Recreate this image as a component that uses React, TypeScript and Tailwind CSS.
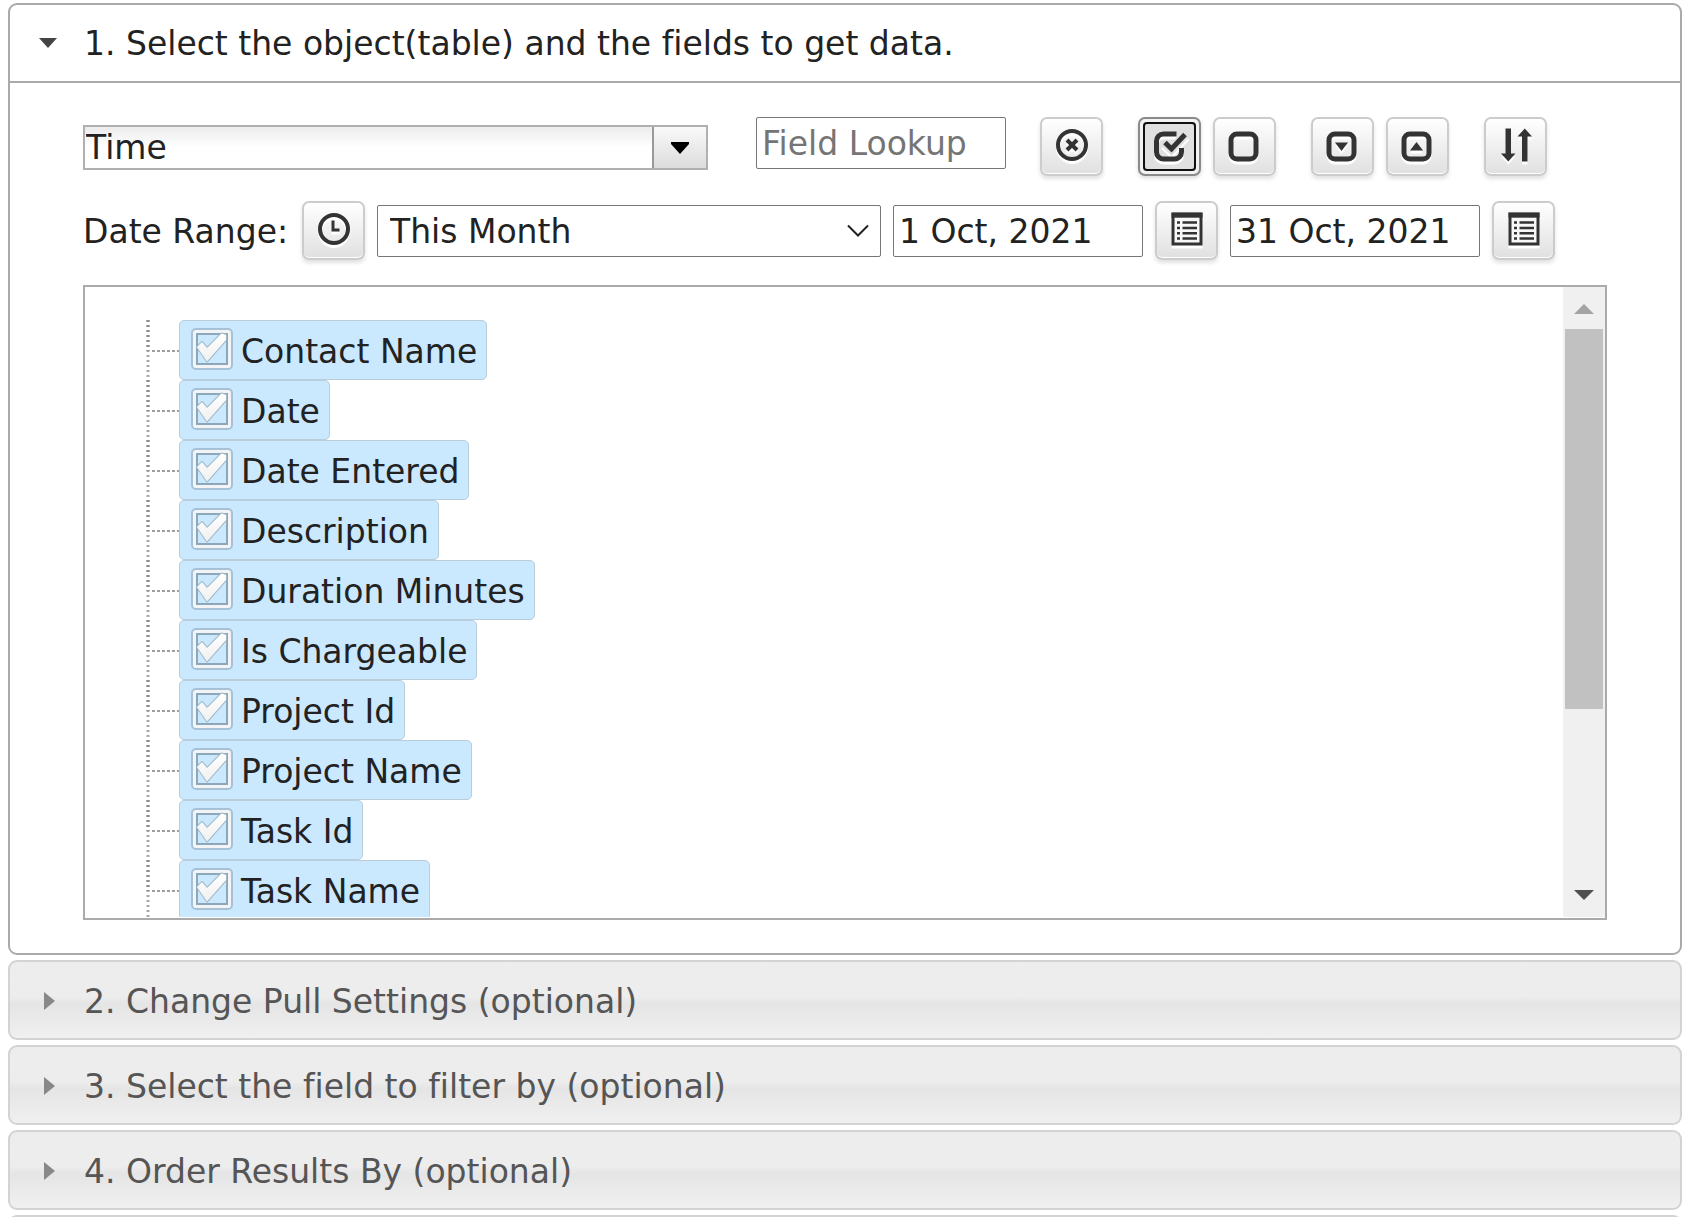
import React, { useState } from "react";

const FIELDS = [
  "Contact Name",
  "Date",
  "Date Entered",
  "Description",
  "Duration Minutes",
  "Is Chargeable",
  "Project Id",
  "Project Name",
  "Task Id",
  "Task Name",
];

const STEPS = [
  "2. Change Pull Settings (optional)",
  "3. Select the field to filter by (optional)",
  "4. Order Results By (optional)",
  "",
];

const inputClass =
  "h-[52px] w-[250px] shrink-0 rounded-[2px] border border-[#767676] bg-white px-[5px] text-[33px] text-[#222] placeholder:text-[#757575] outline-none";

type IconButtonProps = {
  label: string;
  focused?: boolean;
  onClick?: () => void;
  children: React.ReactNode;
};

function IconButton({ label, focused, onClick, children }: IconButtonProps) {
  return (
    <button
      type="button"
      aria-label={label}
      onClick={onClick}
      className={
        focused
          ? "relative flex h-[59px] w-[63px] shrink-0 items-center justify-center rounded-[7px] border-2 border-[#8a8a8a] bg-[#e0e0e0] pb-1 shadow-[inset_0_0_0_3px_#f2f2f2,0_2px_4px_rgba(0,0,0,0.15)] before:absolute before:inset-[3px] before:rounded-[4px] before:border-2 before:border-[#101010]"
          : "flex h-[59px] w-[63px] shrink-0 items-center justify-center rounded-[7px] border-2 border-[#ccc] bg-linear-to-b from-white to-[#e0e0e0] pb-1 shadow-[inset_0_-1px_0_#fff,0_3px_4px_rgba(0,0,0,0.12)]"
      }
    >
      <svg
        viewBox="0 0 36 36"
        className="size-9 overflow-visible drop-shadow-[0_3px_0_#fff]"
        fill="none"
        stroke="#333"
      >
        {children}
      </svg>
    </button>
  );
}

function CalendarIcon() {
  return (
    <>
      <rect x="4" y="3" width="28" height="30" fill="#f7f7f7" strokeWidth="3" />
      <path d="M2.500 4.200h31" strokeWidth="5" />
      <path d="M8 11.500h3M8 17h3M8 22.200h3M8 27.500h3" strokeWidth="2.6" />
      <path d="M13.500 11.500H28M13.500 17H28M13.500 22.200H28M13.500 27.500H28" strokeWidth="2.6" />
    </>
  );
}

function TreeBranch() {
  return (
    <svg viewBox="0 0 33 60" className="h-[60px] w-[33px] shrink-0" stroke="#8c8c8c">
      <path d="M2 0v60" strokeWidth="3" strokeDasharray="2 3" opacity="0.75" />
      <path d="M2 0v31" strokeWidth="3" strokeDasharray="2 3" />
      <path d="M6 31h27" strokeWidth="2" strokeDasharray="3 2" opacity="0.85" />
    </svg>
  );
}

function FieldRow({ name, checked, onToggle }: { name: string; checked: boolean; onToggle: () => void }) {
  return (
    <li className="flex h-[60px]">
      <TreeBranch />
      <label className="flex h-[60px] items-center rounded-[5px] border border-[#b9cddb] bg-[#cae8fe] pt-1 pr-[9px] pl-[11px]">
        <span className="mr-2 mb-[7px] grid">
          <input
            type="checkbox"
            checked={checked}
            onChange={onToggle}
            className="col-start-1 row-start-1 size-[42px] appearance-none"
          />
          <svg viewBox="0 0 42 42" className="pointer-events-none col-start-1 row-start-1 size-[42px]" fill="none">
            <defs>
              <linearGradient id="tick" x1="0" y1="0" x2="0" y2="1">
                <stop offset="0" stopColor="#fff" />
                <stop offset="1" stopColor="#f0f0f0" />
              </linearGradient>
            </defs>
            <rect x="1" y="1" width="40" height="40" rx="4" stroke="#8fa9bb" strokeWidth="2" opacity="0.6" />
            <rect x="3.500" y="3.500" width="35" height="35" rx="2" stroke="#f2f4f6" strokeWidth="3" />
            <rect x="6" y="6" width="30" height="30" stroke="#8ba7b9" strokeWidth="2" />
            {checked && (
              <path
                d="M6 19l5-5 5 6L30.500 5.500l4.500 1.500v5L16 33.500z"
                fill="url(#tick)"
                stroke="#9fb8c8"
                strokeWidth="2"
                strokeLinejoin="round"
                paintOrder="stroke"
              />
            )}
          </svg>
        </span>
        {name}
      </label>
    </li>
  );
}

export default function App() {
  const [selected, setSelected] = useState<string[]>(FIELDS);
  const [lookup, setLookup] = useState("");

  const toggle = (name: string) => {
    setSelected((prev) => (prev.includes(name) ? prev.filter((n) => n !== name) : [...prev, name]));
  };

  return (
    <main className="flex h-screen flex-col gap-[5px] overflow-hidden bg-white pt-[3px] pr-[7px] pl-2 font-['Verdana','DejaVu_Sans',sans-serif] text-[33px] leading-10 text-[#222] [font-variant-ligatures:none]">
      <section className="shrink-0 rounded-[9px] border-2 border-[#aaa] bg-white">
        <h2>
          <button
            type="button"
            aria-expanded="true"
            className="flex h-[78px] w-full items-center border-b-2 border-[#aaa] pt-0.5 pl-[29px] text-left"
          >
            <svg viewBox="0 0 18 12" className="mr-[27px] h-3 w-[18px]">
              <path d="M0 0h18L9 10z" fill="#454545" />
            </svg>
            1. Select the object(table) and the fields to get data.
          </button>
        </h2>

        <div className="px-[73px] pt-[34px] pb-[33px]">
          <div className="flex items-center">
            <div className="mt-0.5 mr-12 flex h-[45px] w-[625px] shrink-0 border-2 border-[#b0b0b0]">
              <input
                type="text"
                aria-label="Object"
                defaultValue="Time"
                className="min-w-0 flex-1 bg-linear-to-b from-[#ececec] to-white to-50% pl-px outline-none"
              />
              <button
                type="button"
                aria-label="Show objects"
                className="flex w-[54px] items-center justify-center border-l-2 border-[#999] bg-linear-to-b from-[#fafafa] to-[#dcdcdc]"
              >
                <svg viewBox="0 0 18 12" className="h-3 w-[18px]">
                  <path d="M0 0h18v2L9 12 0 2z" fill="#000" />
                </svg>
              </button>
            </div>
            <input
              type="text"
              aria-label="Field Lookup"
              placeholder="Field Lookup"
              value={lookup}
              onChange={(e) => setLookup(e.target.value)}
              className={`${inputClass} mr-[34px] self-start`}
            />
            <div className="flex gap-[35px]">
              <IconButton label="Clear lookup" onClick={() => setLookup("")}>
                <circle cx="18" cy="18" r="14" strokeWidth="4" />
                <path d="M13 13l10 10M23 13L13 23" strokeWidth="4" />
              </IconButton>
              <div className="flex gap-3">
                <IconButton label="Select all" focused onClick={() => setSelected(FIELDS)}>
                  <path d="M24.500 7H11.500a7 7 0 0 0-7 7v11a7 7 0 0 0 7 7h11a7 7 0 0 0 7-7v-4" strokeWidth="5" />
                  <path d="M12.500 15.500l7 7L34 7" stroke="#e0e0e0" strokeWidth="9" />
                  <path d="M13 15.500l6.500 6.500L33 7.500" strokeWidth="5" />
                </IconButton>
                <IconButton label="Select none" onClick={() => setSelected([])}>
                  <rect x="4" y="7" width="25" height="25" rx="6" strokeWidth="5" />
                </IconButton>
              </div>
              <div className="flex gap-3">
                <IconButton label="Expand all">
                  <rect x="4" y="7" width="25" height="25" rx="6" strokeWidth="5" />
                  <path d="M10 15.500h13L16.500 24z" fill="#333" stroke="none" />
                </IconButton>
                <IconButton label="Collapse all">
                  <rect x="4" y="7" width="25" height="25" rx="6" strokeWidth="5" />
                  <path d="M10 23.500h13L16.500 15z" fill="#333" stroke="none" />
                </IconButton>
              </div>
              <IconButton label="Sort fields">
                <path d="M7.500 1.500h5.500v25h4.500l-7.200 8-7.300-8h4.500z" fill="#333" stroke="none" />
                <path d="M24 34.500h5.500v-25H34l-7.200-8-7.300 8H24z" fill="#333" stroke="none" />
              </IconButton>
            </div>
          </div>

          <div className="mt-[25px] flex items-center gap-3">
            <label htmlFor="range" className="w-[207px] shrink-0 pt-0.5">
              Date Range:
            </label>
            <IconButton label="Reset date range">
              <circle cx="18" cy="18" r="14" strokeWidth="4" />
              <path d="M17 9.500V19h6.500" strokeWidth="3" />
            </IconButton>
            <div className="relative w-[504px] shrink-0">
              <select
                id="range"
                className="block h-[52px] w-full appearance-none rounded-[2px] border border-[#767676] bg-white pt-0.5 pl-3 outline-none"
              >
                <option>This Month</option>
              </select>
              <svg
                viewBox="0 0 22 14"
                className="pointer-events-none absolute top-[19px] right-3 h-3.5 w-[22px]"
                fill="none"
                stroke="#222"
                strokeWidth="2"
              >
                <path d="M1 1.500l10 10 10-10" />
              </svg>
            </div>
            <input
              type="text"
              aria-label="From date"
              defaultValue="1 Oct, 2021"
              className={`${inputClass} pt-0.5`}
            />
            <IconButton label="Pick from date">
              <CalendarIcon />
            </IconButton>
            <input
              type="text"
              aria-label="To date"
              defaultValue="31 Oct, 2021"
              className={`${inputClass} pt-0.5`}
            />
            <IconButton label="Pick to date">
              <CalendarIcon />
            </IconButton>
          </div>

          <div className="mt-[25px] flex h-[635px] border-2 border-[#aaa] pb-px">
            <ul className="min-w-0 flex-1 overflow-hidden pt-[33px] pl-[61px]">
              {FIELDS.map((name) => (
                <FieldRow
                  key={name}
                  name={name}
                  checked={selected.includes(name)}
                  onToggle={() => toggle(name)}
                />
              ))}
            </ul>
            <div className="flex w-[42px] shrink-0 flex-col bg-[#f0f0f0] px-0.5">
              <button type="button" aria-label="Scroll up" className="flex h-[42px] items-center justify-center pt-0.5">
                <svg viewBox="0 0 20 10" className="h-2.5 w-5">
                  <path d="M0 10h20L10 0z" fill="#a3a3a3" />
                </svg>
              </button>
              <div className="h-[380px] bg-[#c1c1c1]" />
              <button
                type="button"
                aria-label="Scroll down"
                className="mt-auto flex h-[42px] items-center justify-center pb-0.5"
              >
                <svg viewBox="0 0 20 10" className="h-2.5 w-5">
                  <path d="M0 0h20L10 10z" fill="#505050" />
                </svg>
              </button>
            </div>
          </div>
        </div>
      </section>

      {STEPS.map((title) => (
        <h2 key={title} className="shrink-0">
          <button
            type="button"
            aria-expanded="false"
            aria-label={title || "Next step"}
            className="flex h-20 w-full items-center rounded-[9px] border-2 border-[#d3d3d3] bg-linear-to-b from-[#ededed] from-45% via-[#e5e5e5] via-55% to-[#f0f0f0] pt-1 pl-[34px] text-left text-[#555]"
          >
            <svg viewBox="0 0 12 18" className="mr-7 mb-0.5 h-[18px] w-3">
              <path d="M0 0l11 9L0 18z" fill="#888" />
            </svg>
            {title}
          </button>
        </h2>
      ))}
    </main>
  );
}
